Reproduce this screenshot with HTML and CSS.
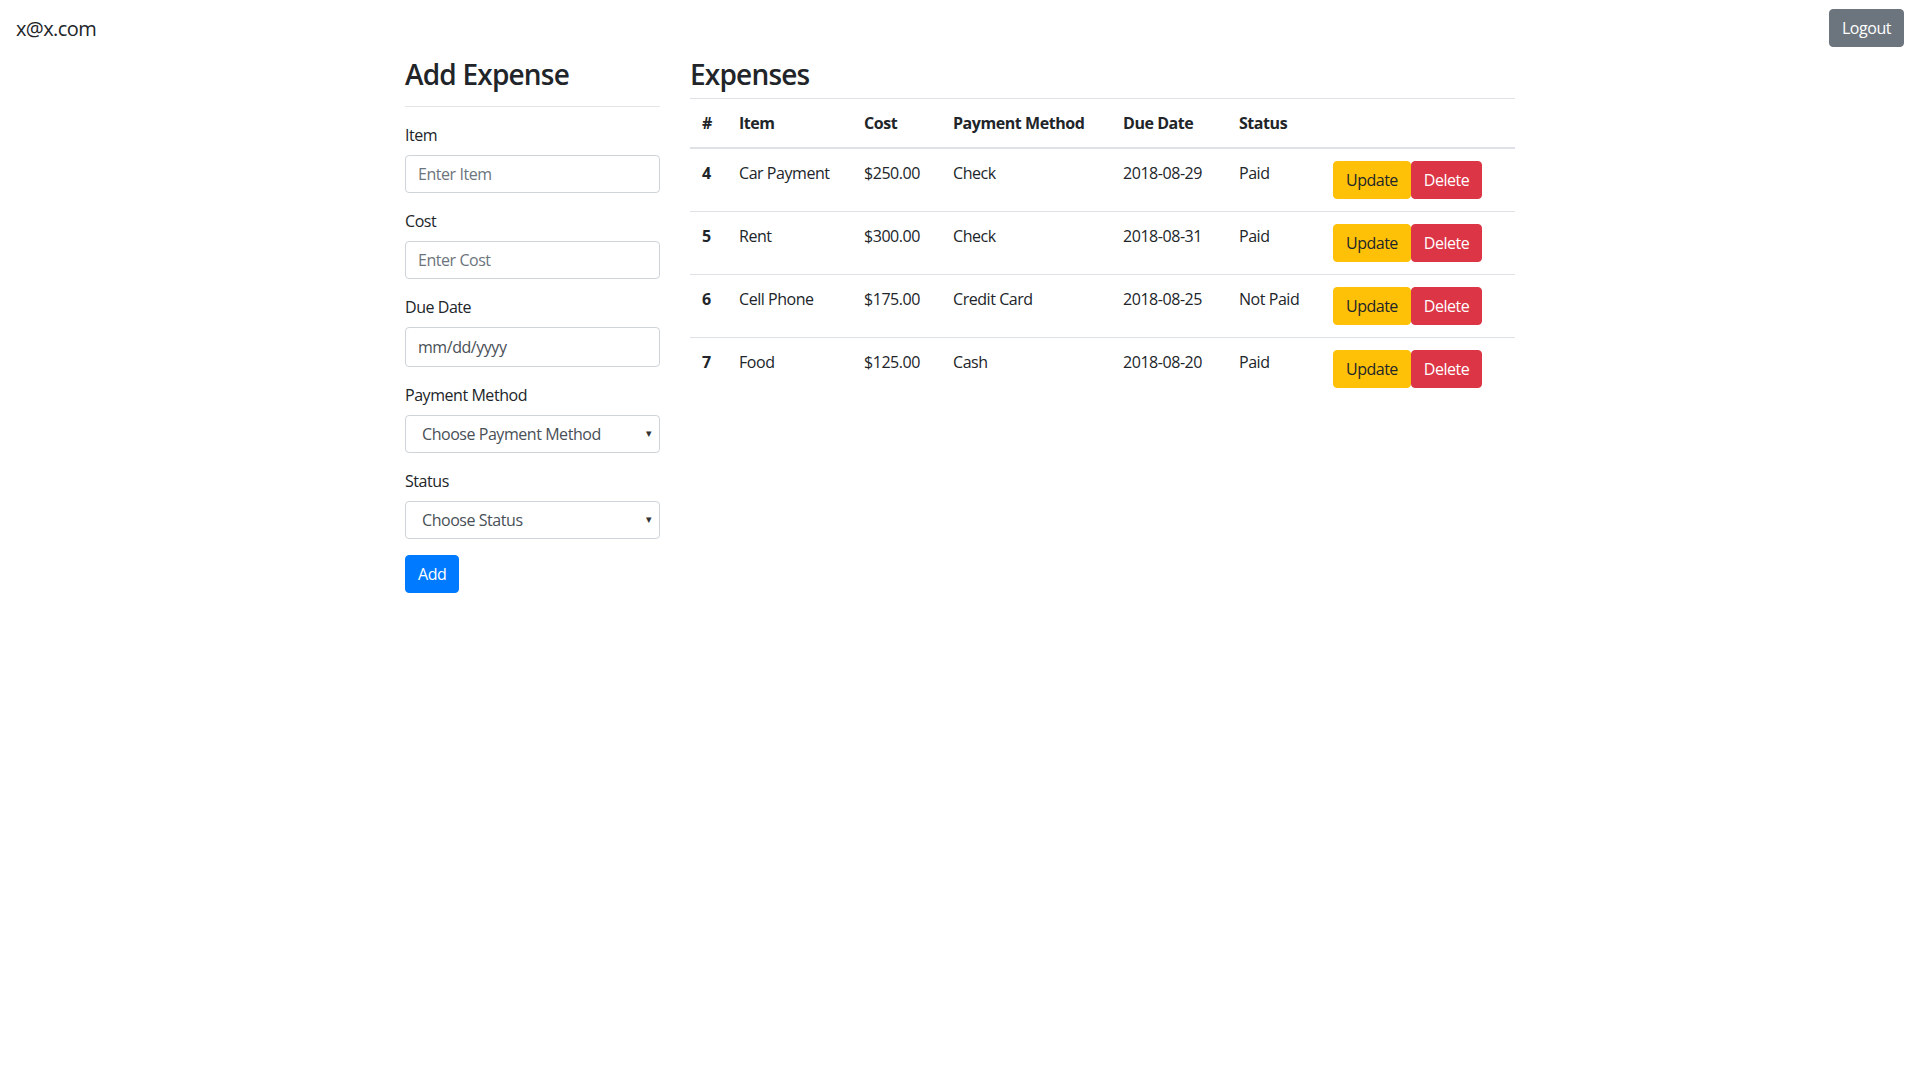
FILE: index.html
```html
<!DOCTYPE html>
<html lang="en">
<head>
<meta charset="utf-8">
<title>Expenses</title>
<link rel="stylesheet" href="styles.css">
</head>
<body>
<nav class="navbar">
  <span class="brand">x@x.com</span>
  <button class="btn btn-secondary">Logout</button>
</nav>
<div class="container">
  <div class="row">
    <div class="col-3">
      <h3 class="heading">Add Expense</h3>
      <hr class="divider">
      <form class="form">
        <div class="form-group">
          <label class="label">Item</label>
          <input class="form-control" type="text" placeholder="Enter Item">
        </div>
        <div class="form-group">
          <label class="label">Cost</label>
          <input class="form-control" type="text" placeholder="Enter Cost">
        </div>
        <div class="form-group">
          <label class="label">Due Date</label>
          <div class="form-control date-control">mm/dd/yyyy</div>
        </div>
        <div class="form-group">
          <label class="label">Payment Method</label>
          <div class="select-wrap">
            <div class="form-control select-control">Choose Payment Method</div>
            <span class="select-arrow">&#9662;</span>
          </div>
        </div>
        <div class="form-group">
          <label class="label">Status</label>
          <div class="select-wrap">
            <div class="form-control select-control">Choose Status</div>
            <span class="select-arrow">&#9662;</span>
          </div>
        </div>
        <button type="button" class="btn btn-primary">Add</button>
      </form>
    </div>
    <div class="col-9">
      <h3 class="heading">Expenses</h3>
      <table class="table">
        <colgroup>
          <col class="c-num"><col class="c-item"><col class="c-cost"><col class="c-method"><col class="c-date"><col class="c-status"><col class="c-actions">
        </colgroup>
        <thead>
          <tr><th>#</th><th>Item</th><th>Cost</th><th>Payment Method</th><th>Due Date</th><th>Status</th><th></th></tr>
        </thead>
        <tbody>
          <tr><th>4</th><td>Car Payment</td><td>$250.00</td><td>Check</td><td>2018-08-29</td><td>Paid</td><td><div class="actions"><button class="btn btn-warning">Update</button><button class="btn btn-danger">Delete</button></div></td></tr>
          <tr><th>5</th><td>Rent</td><td>$300.00</td><td>Check</td><td>2018-08-31</td><td>Paid</td><td><div class="actions"><button class="btn btn-warning">Update</button><button class="btn btn-danger">Delete</button></div></td></tr>
          <tr><th>6</th><td>Cell Phone</td><td>$175.00</td><td>Credit Card</td><td>2018-08-25</td><td>Not Paid</td><td><div class="actions"><button class="btn btn-warning">Update</button><button class="btn btn-danger">Delete</button></div></td></tr>
          <tr><th>7</th><td>Food</td><td>$125.00</td><td>Cash</td><td>2018-08-20</td><td>Paid</td><td><div class="actions"><button class="btn btn-warning">Update</button><button class="btn btn-danger">Delete</button></div></td></tr>
        </tbody>
      </table>
    </div>
  </div>
</div>
</body>
</html>
```
FILE: styles.css
```css
* { box-sizing: border-box; }
html, body { margin: 0; }
body {
  font-family: "Open Sans", "Noto Sans", "Liberation Sans", sans-serif;
  font-size: 16px;
  line-height: 1.5;
  color: #212529;
  background: #fff;
  letter-spacing: -0.45px;
}
button, input { font-family: inherit; font-size: 16px; letter-spacing: inherit; }

.navbar {
  display: flex;
  justify-content: space-between;
  align-items: center;
  padding: 8px 16px;
  height: 56px;
}
.brand {
  font-size: 20px;
  line-height: 30px;
  padding: 6px 0 4px;
  color: #212529;
  letter-spacing: -0.6px;
}

.btn {
  display: inline-block;
  font-weight: 400;
  line-height: 24px;
  height: 38px;
  padding: 6px 12px;
  border: 1px solid transparent;
  border-radius: 4px;
  cursor: pointer;
  text-align: center;
  white-space: nowrap;
}
.btn-secondary { background: #6c757d; border-color: #6c757d; color: #fff; }
.btn-primary { background: #007bff; border-color: #007bff; color: #fff; }
.btn-warning { background: #ffc107; border-color: #ffc107; color: #212529; letter-spacing: -0.5px; }
.btn-danger { background: #dc3545; border-color: #dc3545; color: #fff; letter-spacing: -0.5px; }

.container {
  width: 1140px;
  margin: 0 auto;
  padding: 0 15px;
}
.row { display: flex; margin: 0 -15px; }
.col-3 { flex: 0 0 25%; max-width: 25%; padding: 0 15px; }
.col-9 { flex: 0 0 75%; max-width: 75%; padding: 0 15px; }

.heading {
  font-size: 28px;
  font-weight: 600;
  line-height: 1.2;
  padding-top: 2px;
  margin: 0 0 6px;
  letter-spacing: -0.8px;
}
.divider {
  margin: 14px 0 16px;
  border: 0;
  border-top: 1px solid rgba(0,0,0,0.1);
  height: 0;
}
.form { margin: 0; }
.form-group { margin-bottom: 16px; }
.label { display: inline-block; margin-bottom: 8px; }
.form-control {
  display: block;
  width: 100%;
  height: 38px;
  padding: 6px 12px;
  font-size: 16px;
  line-height: 24px;
  color: #495057;
  background: #fff;
  border: 1px solid #ced4da;
  border-radius: 4px;
}
.form-control::placeholder { color: #6c757d; opacity: 1; }
.date-control { height: 40px; padding-top: 7px; }
.select-wrap { position: relative; }
.select-control { padding-left: 16px; }
.select-arrow {
  position: absolute;
  right: 8px;
  top: 8px;
  font-size: 11px;
  color: #333;
  line-height: 20px;
}

.table {
  width: 100%;
  border-collapse: collapse;
  table-layout: fixed;
}
.c-num { width: 37px; }
.c-item { width: 125px; }
.c-cost { width: 89px; }
.c-method { width: 170px; }
.c-date { width: 116px; }
.c-status { width: 94px; }
.c-actions { width: 194px; }
.table th, .table td {
  padding: 12px;
  text-align: left;
  vertical-align: top;
  border-top: 1px solid #dee2e6;
}
.table th { font-weight: 700; }
.table thead th {
  vertical-align: bottom;
  border-bottom: 2px solid #dee2e6;
}
.actions { display: flex; }
```
